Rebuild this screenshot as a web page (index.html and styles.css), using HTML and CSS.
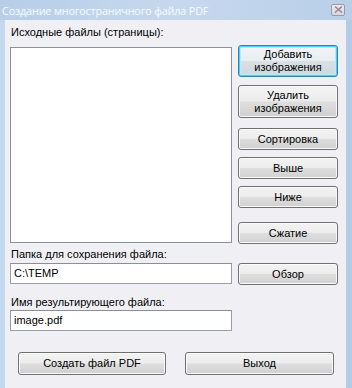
FILE: index.html
```html
<!DOCTYPE html>
<html lang="ru">
<head>
<meta charset="utf-8">
<title>Создание многостраничного файла PDF</title>
<link rel="stylesheet" href="styles.css">
</head>
<body>
<div class="window">
  <div class="titlebar">
    <span class="title">Создание многостраничного файла PDF</span>
    <span class="close">
      <svg width="9" height="7" viewBox="0 0 9 7"><path d="M1 0.5 L8 6.5 M8 0.5 L1 6.5" stroke="#9b8893" stroke-width="1.6" fill="none"/></svg>
    </span>
  </div>
  <div class="client">
    <div class="label first">Исходные файлы (страницы):</div>
    <div class="toprow">
      <div class="listbox"></div>
      <div class="btncol">
        <button class="btn two default">Добавить<br>изображения</button>
        <button class="btn two del">Удалить<br>изображения</button>
        <button class="btn one sort">Сортировка</button>
        <button class="btn one up">Выше</button>
        <button class="btn one down">Ниже</button>
        <button class="btn one zip">Сжатие</button>
      </div>
    </div>
    <div class="label folder">Папка для сохранения файла:</div>
    <div class="inrow">
      <div class="input">C:\TEMP</div>
      <button class="btn one browse">Обзор</button>
    </div>
    <div class="label fname">Имя результирующего файла:</div>
    <div class="inrow">
      <div class="input">image.pdf</div>
    </div>
    <div class="bottomrow">
      <button class="btn big create">Создать файл PDF</button>
      <button class="btn big exit">Выход</button>
    </div>
  </div>
</div>
</body>
</html>
```

FILE: styles.css
```css
* { box-sizing: border-box; }
html, body { margin: 0; padding: 0; }
body {
  width: 352px;
  height: 388px;
  overflow: hidden;
  font-family: "Liberation Sans", Arial, sans-serif;
  font-size: 11px;
  color: #000;
}
.window {
  width: 352px;
  height: 388px;
  background: linear-gradient(to right, #c3d7ed, #bcd2ea 60%, #b3cbe6);
  display: flex;
  flex-direction: column;
  overflow: hidden;
}
.titlebar {
  height: 20px;
  flex: none;
  display: flex;
  align-items: center;
  justify-content: space-between;
  padding: 0 7px 0 2px;
  background: linear-gradient(to right, #b6cee8, #c6d8ee 50%, #b9cfe8);
}
.title {
  color: #f6f9fd;
  font-family: "Open Sans", "Liberation Sans", sans-serif;
  font-size: 10.8px;
  letter-spacing: -0.15px;
  text-shadow: 0 0 3px #c9dbee;
}
.close {
  width: 14px;
  height: 12px;
  border: 1px solid #8f9db0;
  border-radius: 2px;
  background: linear-gradient(#eeecef, #d9d5db);
  display: flex;
  align-items: center;
  justify-content: center;
  margin-top: -1px;
}
.client {
  flex: 1;
  margin: 0 6px 0 5px;
  background: #f0f0f4;
  padding: 5px 0 0 5px;
  display: flex;
  flex-direction: column;
}
.label {
  height: 14px;
  line-height: 14px;
  padding-left: 1px;
  white-space: nowrap;
}
.first { margin-bottom: 6px; }
.toprow {
  display: flex;
  align-items: flex-start;
  gap: 6px;
}
.listbox {
  width: 222px;
  height: 196px;
  margin-top: 2px;
  background: #fff;
  border: 1px solid #8d9199;
}
.btncol {
  display: flex;
  flex-direction: column;
  width: 100px;
}
.btn {
  font-family: "Liberation Sans", Arial, sans-serif;
  font-size: 11px;
  color: #000;
  padding: 0;
  border: 1px solid #707070;
  border-radius: 3px;
  background: linear-gradient(#f3f3f3 0%, #ececec 48%, #dedede 52%, #d0d0d0 100%);
  box-shadow: inset 0 0 0 1px #fbfbfb;
  line-height: 13px;
  text-align: center;
  width: 100px;
}
.btn.two { height: 32px; }
.btn.one { height: 22px; }
.btn.default {
  border-color: #3c7fb1;
  box-shadow: inset 0 0 0 1px #48cff7, inset 0 0 0 2px #b7ebfb;
  background: linear-gradient(#f1f5f7 0%, #e8eef1 48%, #d9e1e6 52%, #cfd8dd 100%);
}
.del { margin-top: 8px; height: 33px !important; }
.sort { margin-top: 10px; }
.up { margin-top: 7px; }
.down { margin-top: 7px; }
.zip { margin-top: 14px; }
.folder { margin-top: 3px; margin-bottom: 2px; }
.inrow {
  display: flex;
  align-items: flex-start;
  gap: 6px;
}
.input {
  width: 222px;
  height: 21px;
  background: #fff;
  border: 1px solid #9a9ea6;
  border-top-color: #8a8e96;
  padding: 2px 0 0 3px;
  line-height: 15px;
}
.browse { height: 22px !important; }
.fname { margin-top: 10px; margin-bottom: 1px; }
.bottomrow {
  display: flex;
  gap: 19px;
  padding-left: 8px;
  margin-top: 21px;
}
.btn.big {
  height: 23px;
  width: 148px;
}
.btn.exit { width: 149px; }
```
